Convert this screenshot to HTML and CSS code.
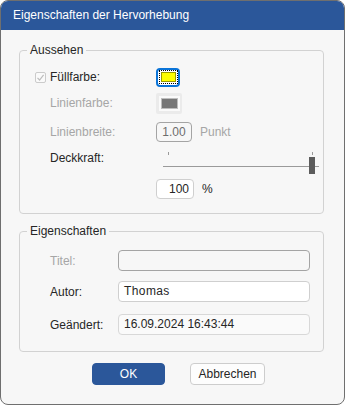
FILE: index.html
```html
<!DOCTYPE html>
<html lang="de">
<head>
    <meta charset="UTF-8">
    <title>Eigenschaften der Hervorhebung</title>
    <link rel="stylesheet" href="styles.css">
</head>
<body>
    <div class="dialog">
        <div class="titlebar">Eigenschaften der Hervorhebung</div>

        <div class="content">
            <fieldset class="group">
                <legend>Aussehen</legend>
                <div class="look">
                    <div class="row row-fill">
                        <label class="check">
                            <span class="checkbox">
                                <svg width="9" height="9" viewBox="0 0 9 9"><path d="M1.5 4.8 L3.6 7 L7.6 1.8" fill="none" stroke="#bdbdbd" stroke-width="1.2"/></svg>
                            </span>
                            <span class="label">Füllfarbe:</span>
                        </label>
                        <button class="swatch focused"><span class="chip yellow"></span></button>
                    </div>

                    <div class="row row-line">
                        <span class="label indent disabled">Linienfarbe:</span>
                        <button class="swatch inactive"><span class="chip gray"></span></button>
                    </div>

                    <div class="row row-width">
                        <span class="label indent disabled">Linienbreite:</span>
                        <div class="field small disabled-field">1.00</div>
                        <span class="unit disabled">Punkt</span>
                    </div>

                    <div class="row row-opacity">
                        <span class="label indent">Deckkraft:</span>
                        <div class="slider">
                            <span class="tick tick-start"></span>
                            <span class="tick tick-end"></span>
                            <span class="track"></span>
                            <span class="thumb"></span>
                        </div>
                    </div>

                    <div class="row row-percent">
                        <div class="field small num">100</div>
                        <span class="unit">%</span>
                    </div>
                </div>
            </fieldset>

            <fieldset class="group second">
                <legend>Eigenschaften</legend>
                <div class="props">
                    <div class="prop">
                        <span class="prop-label disabled">Titel:</span>
                        <div class="field wide disabled-field"></div>
                    </div>
                    <div class="prop">
                        <span class="prop-label">Autor:</span>
                        <div class="field wide author">Thomas</div>
                    </div>
                    <div class="prop last">
                        <span class="prop-label">Geändert:</span>
                        <div class="field wide readonly">16.09.2024 16:43:44</div>
                    </div>
                </div>
            </fieldset>

            <div class="buttons">
                <button class="btn primary">OK</button>
                <button class="btn">Abbrechen</button>
            </div>
        </div>
    </div>
</body>
</html>
```

FILE: styles.css
```css
:root {
    --title-color: #2b579a;
    --panel-color: #f7f7f7;
    --border-color: #d2d2d2;
    --text-color: #262626;
    --disabled-color: #a6a6a6;
}
* {
    box-sizing: border-box;
}
body {
    margin: 0;
    background: #fff;
    font-family: "Liberation Sans", Arial, sans-serif;
    font-size: 12px;
    color: var(--text-color);
}
.dialog {
    width: 345px;
    height: 405px;
    border: 1px solid #6f6f6f;
    border-radius: 8px;
    overflow: hidden;
    background: var(--panel-color);
}
.titlebar {
    height: 29px;
    background: var(--title-color);
    color: #fff;
    padding-left: 12px;
    line-height: 29px;
    font-size: 12px;
}
.content {
    padding: 13px 20px 0 18px;
}
.group {
    margin: 0;
    padding: 0;
    border: 1px solid var(--border-color);
    border-radius: 4px;
    min-width: 0;
}
.group legend {
    margin-left: 7px;
    padding: 0 3px;
    line-height: 14px;
    font-size: 12px;
}
.look {
    padding: 11px 0 14px 15px;
}
.row {
    display: flex;
    align-items: center;
}
.row-fill {
    height: 18px;
}
.row-line {
    height: 20px;
    margin-top: 7px;
}
.row-width {
    height: 20px;
    margin-top: 9px;
}
.row-opacity {
    height: 28px;
    margin-top: 6px;
    align-items: flex-start;
}
.row-opacity .label {
    margin-top: 3px;
}
.row-percent {
    height: 20px;
    margin-top: 3px;
    padding-left: 121px;
}
.check {
    display: flex;
    align-items: center;
    width: 121px;
}
.checkbox {
    width: 11px;
    height: 11px;
    border: 1px solid #cbcbcb;
    border-radius: 2px;
    background: #fafafa;
    display: flex;
    align-items: center;
    justify-content: center;
    margin-right: 4px;
}
.label {
    line-height: 14px;
}
.indent {
    width: 121px;
    padding-left: 15px;
}
.disabled {
    color: var(--disabled-color);
}
.swatch {
    padding: 0;
    margin: 0;
    font: inherit;
    display: flex;
    align-items: center;
    justify-content: center;
}
.focused {
    width: 24px;
    height: 19px;
    border: 2px solid #0a74d8;
    border-radius: 4px;
    background: #fff;
}
.focused .chip {
    width: 15px;
    height: 10px;
    border: 1px solid #9a9a00;
    outline: 1px dotted #000;
    outline-offset: 1px;
}
.inactive {
    width: 26px;
    height: 21px;
    border: 0;
    border-radius: 2px;
    background: #ebebeb;
}
.inactive .chip {
    width: 17px;
    height: 11px;
    border: 1px solid #bdbdbd;
    box-shadow: 0 0 0 2px #fafafa;
}
.yellow {
    background: #ffff00;
}
.gray {
    background: #777;
}
.field {
    height: 20px;
    border: 1px solid #cfcfcf;
    border-radius: 4px;
    background: #fff;
    padding: 0 5px;
    line-height: 18px;
    font-size: 12px;
}
.small {
    width: 36px;
    text-align: center;
}
.num {
    width: 38px;
    text-align: right;
    padding-right: 4px;
}
.disabled-field {
    background: var(--panel-color);
    border-color: #a4a4a4;
    color: #6d6d6d;
}
.unit {
    margin-left: 8px;
}
.slider {
    position: relative;
    width: 156px;
    height: 28px;
    margin-left: 7px;
}
.tick {
    position: absolute;
    top: 4px;
    width: 1px;
    height: 3px;
    background: #9a9a9a;
}
.tick-start {
    left: 5px;
}
.tick-end {
    left: 149px;
}
.track {
    position: absolute;
    left: 0;
    right: 0;
    top: 18px;
    height: 1px;
    background: #9a9a9a;
}
.thumb {
    position: absolute;
    left: 146px;
    top: 9px;
    width: 6px;
    height: 17px;
    background: #5c5c5c;
}
.second {
    margin-top: 10px;
}
.props {
    padding: 5px 13px 16px 30px;
}
.prop {
    display: flex;
    align-items: center;
    height: 21px;
    margin-top: 7px;
}
.prop + .prop {
    margin-top: 10px;
}
.prop.last {
    margin-top: 12px;
}
.prop-label {
    width: 68px;
}
.wide {
    flex: 1;
    height: 21px;
    line-height: 19px;
}
.author {
    letter-spacing: 0.4px;
}
.readonly {
    background: #fafafa;
    border-color: #d8d8d8;
}
.buttons {
    display: flex;
    gap: 25px;
    margin-top: 11px;
    padding-left: 73px;
}
.btn {
    width: 75px;
    height: 22px;
    border: 1px solid #cdcdcd;
    border-radius: 4px;
    background: #fdfdfd;
    font: inherit;
    color: var(--text-color);
    padding: 0;
}
.primary {
    width: 73px;
    background: var(--title-color);
    border-color: var(--title-color);
    color: #fff;
}
```
